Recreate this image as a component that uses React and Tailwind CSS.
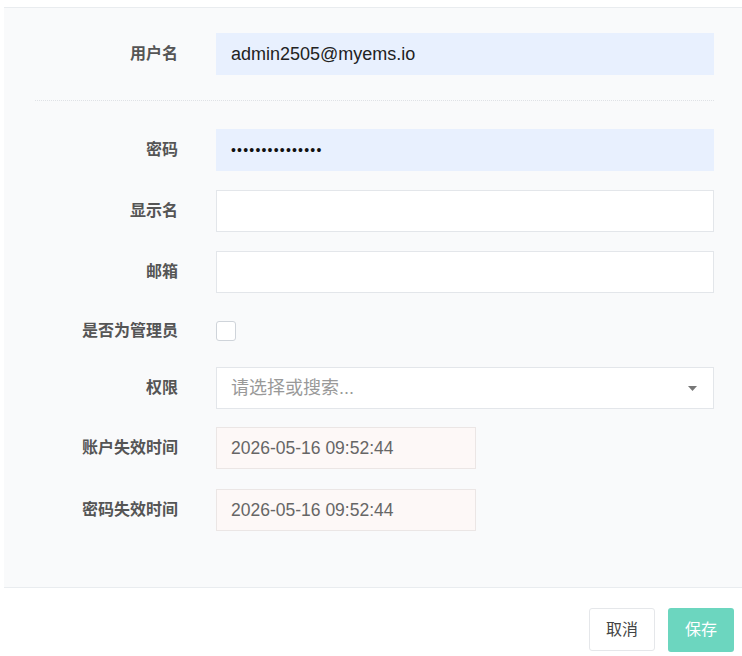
import { useState } from "react";

const font = { fontFamily: '"Liberation Sans", "Noto Sans CJK SC", sans-serif' };

const Label = ({ children }) => (
  <div className="w-[189px] shrink-0 pr-[15px] text-right text-[16px] font-bold text-[#555]">
    {children}
  </div>
);

const Row = ({ label, children, className = "" }) => (
  <div className={`flex items-center ${className}`}>
    <Label>{label}</Label>
    <div className="ml-[23px] mr-[28px] flex flex-1">{children}</div>
  </div>
);

// 自动填充的输入框是浅蓝底色
const TextInput = ({ value, filled = false }) => (
  <div
    className={`flex h-[42px] w-full items-center border px-[14px] text-[18px] text-[#222] ${
      filled ? "border-[#e8f0fe] bg-[#e8f0fe]" : "border-[#e3e6ea] bg-white"
    }`}
  >
    {value}
  </div>
);

const DateInput = ({ value }) => (
  <div className="flex h-[42px] w-[260px] items-center border border-[#ebe6e5] bg-[#fdf8f7] px-[14px] text-[17.5px] text-[#666]">
    {value}
  </div>
);

export default function App() {
  const [isAdmin, setIsAdmin] = useState(false);

  return (
    <div className="min-h-[656px] w-[742px] bg-white" style={font}>
      <div className="h-[7px]" />
      {/* 表单面板 */}
      <div className="ml-[4px] border-y border-[#e9ecef] bg-[#f9fafb] pt-[25px] pb-[56px]">
        <Row label="用户名">
          <TextInput value="admin2505@myems.io" filled />
        </Row>

        <div className="ml-[31px] mr-[28px] mt-[25px] border-t border-dotted border-[#dfe2e6]" />

        <Row label="密码" className="mt-[28px]">
          <TextInput
            filled
            value={<span className="text-[14px] tracking-[1.2px] text-[#111]">•••••••••••••••</span>}
          />
        </Row>

        <Row label="显示名" className="mt-[19px]">
          <TextInput value="" />
        </Row>

        <Row label="邮箱" className="mt-[19px]">
          <TextInput value="" />
        </Row>

        <Row label="是否为管理员" className="mt-[17px] h-[42px]">
          <button
            type="button"
            onClick={() => setIsAdmin(!isAdmin)}
            className="h-[20px] w-[20px] rounded-[3px] border border-[#cfd4da] bg-white"
          >
            {isAdmin && <span className="text-[12px] text-[#333]">✓</span>}
          </button>
        </Row>

        <Row label="权限" className="mt-[15px]">
          <div className="flex h-[42px] w-full items-center justify-between border border-[#e3e6ea] bg-white pl-[14px] pr-[16px]">
            <span className="text-[18px] text-[#999]">请选择或搜索...</span>
            <svg width="9" height="5" viewBox="0 0 9 5">
              <path d="M0 0 L9 0 L4.5 5 Z" fill="#777" />
            </svg>
          </div>
        </Row>

        <Row label="账户失效时间" className="mt-[18px]">
          <DateInput value="2026-05-16 09:52:44" />
        </Row>

        <Row label="密码失效时间" className="mt-[20px]">
          <DateInput value="2026-05-16 09:52:44" />
        </Row>
      </div>

      {/* 底部按钮 */}
      <div className="flex justify-end gap-[13px] pr-[8px] pt-[20px]">
        <button
          type="button"
          className="h-[43px] w-[66px] rounded-[3px] border border-[#e5e7ea] bg-white text-[16px] text-[#444]"
        >
          取消
        </button>
        <button
          type="button"
          className="h-[44px] w-[66px] rounded-[3px] bg-[#6cd6bf] text-[16px] text-white"
        >
          保存
        </button>
      </div>
    </div>
  );
}
